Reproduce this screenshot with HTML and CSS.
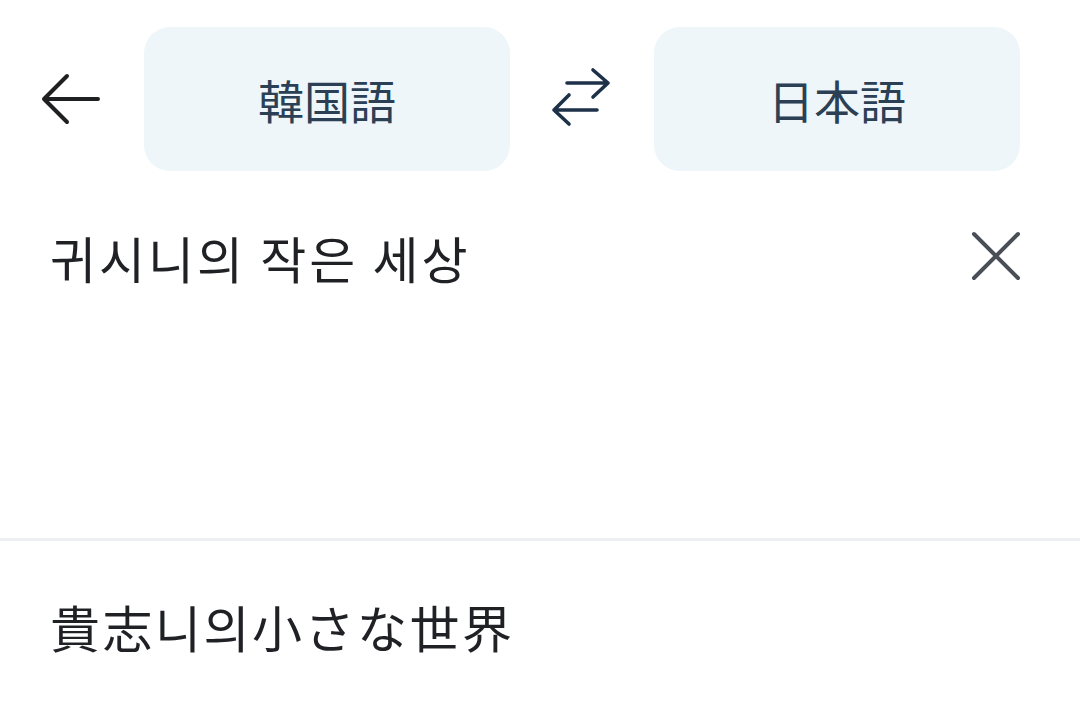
FILE: index.html
```html
<!DOCTYPE html>
<html lang="ja">
  <head>
    <meta charset="UTF-8" />
    <meta name="viewport" content="width=device-width, initial-scale=1.0" />
    <title>translate</title>
    <link rel="stylesheet" href="styles.css">
  </head>
  <body>
    <div class="top-bar">
      <span class="icon-btn back-btn">
        <svg width="64" height="56" viewBox="0 0 64 56">
          <path d="M4 28 H58 M27 5 L4 28 L27 51" fill="none" stroke="#1f2022" stroke-width="4" stroke-linecap="round" stroke-linejoin="round" />
        </svg>
      </span>
      <div class="lang-pill">韓国語</div>
      <span class="icon-btn swap-btn">
        <svg width="64" height="64" viewBox="0 0 64 64">
          <path d="M16 17 H57 M42 4 L57 17 L42 31" fill="none" stroke="#1d3149" stroke-width="3.6" stroke-linecap="round" stroke-linejoin="round" />
          <path d="M46 44 H3 M18 29 L3 44 L18 58" fill="none" stroke="#1d3149" stroke-width="3.6" stroke-linecap="round" stroke-linejoin="round" />
        </svg>
      </span>
      <div class="lang-pill">日本語</div>
    </div>

    <div class="source-box">
      <div class="source-text">귀시니의 작은 세상</div>
      <span class="clear-btn">
        <svg width="52" height="52" viewBox="0 0 52 52">
          <path d="M4 4 L48 48 M48 4 L4 48" fill="none" stroke="#4a4f57" stroke-width="4" stroke-linecap="round" />
        </svg>
      </span>
    </div>

    <div class="result-box">
      <div class="result-text">貴志니의小さな世界</div>
    </div>
  </body>
</html>
```

FILE: styles.css
```css
:root {
  --pill-bg: #eef6f9;
  --pill-text: #2b4055;
  --text-color: #1f2125;
  --divider: #eeeff2;
}

body {
  margin: 0;
  background: #fff;
  font-family: "Noto Sans CJK JP", "Noto Sans CJK KR", "Noto Sans", sans-serif;
  color: var(--text-color);
  width: 1080px;
  height: 722px;
  overflow: hidden;
}

.top-bar {
  display: flex;
  align-items: center;
  padding-top: 27px;
}

.icon-btn {
  width: 144px;
  height: 144px;
  display: flex;
  align-items: center;
  justify-content: center;
}

.swap-btn svg {
  margin-top: -2px;
  margin-left: 2px;
}

.lang-pill {
  width: 366px;
  height: 144px;
  border-radius: 26px;
  background: var(--pill-bg);
  color: var(--pill-text);
  font-size: 46px;
  display: flex;
  align-items: center;
  justify-content: center;
}

.source-box {
  height: 370px;
  display: flex;
  align-items: flex-start;
  justify-content: space-between;
  padding: 54px 58px 0 50px;
  box-sizing: border-box;
  border-bottom: 3px solid var(--divider);
}

.source-text {
  font-family: "Noto Sans CJK KR", "Noto Sans", sans-serif;
  font-size: 50px;
  line-height: 64px;
  letter-spacing: 3px;
}

.clear-btn {
  margin-top: 5px;
  display: flex;
}

.result-box {
  padding: 53px 50px 0 50px;
}

.result-text {
  font-size: 50px;
  line-height: 64px;
  letter-spacing: 2.5px;
}
```
